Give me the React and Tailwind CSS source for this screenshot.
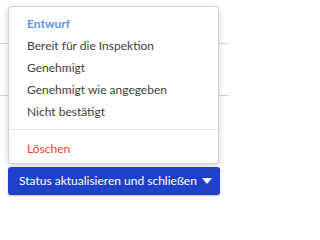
import React from "react";

const items = [
  "Bereit für die Inspektion",
  "Genehmigt",
  "Genehmigt wie angegeben",
  "Nicht bestätigt",
];

const StatusDropdown = () => {
  return (
    <div className="absolute left-[8px] top-[6px] w-[212px]">
      {/* Menu */}
      <div className="w-[211px] h-[158px] bg-white border border-[#d4d4d4] rounded-[3px] shadow-[0_2px_6px_rgba(0,0,0,0.18)] pt-[6px]">
        <div className="h-[22px] flex items-center pl-[18px] text-[12px] font-bold text-[#5f92f0]">
          Entwurf
        </div>
        {items.map((label) => (
          <div
            key={label}
            className="h-[22px] flex items-center pl-[18px] text-[12px] text-[#3d3d3d]"
          >
            {label}
          </div>
        ))}
        <div className="mt-[6px] h-px bg-[#e2e2e2]" />
        <div className="mt-[8px] h-[22px] flex items-center pl-[18px] text-[12px] text-[#f23c36]">
          Löschen
        </div>
      </div>

      {/* Trigger button */}
      <button className="mt-[3px] w-[212px] h-[28px] flex items-center pl-[11px] gap-[5px] bg-[#1f41c9] rounded-[3px] text-white text-[12px] whitespace-nowrap shadow-[0_1px_2px_rgba(0,0,0,0.25)]">
        <span>Status aktualisieren und schließen</span>
        <svg width="10" height="6" viewBox="0 0 10 6">
          <path d="M0 0h10L5 6z" fill="#fff" />
        </svg>
      </button>
    </div>
  );
};

export default function App() {
  return (
    <div
      className="relative w-[229px] h-[207px] bg-white overflow-hidden"
      style={{ fontFamily: "Lato, 'Open Sans', sans-serif" }}
    >
      {/* table rows behind the menu */}
      <div className="h-[44px] border-b border-[#d8d8d8]" />
      <div className="h-[52px] border-b border-[#d8d8d8]" />
      <StatusDropdown />
    </div>
  );
}
